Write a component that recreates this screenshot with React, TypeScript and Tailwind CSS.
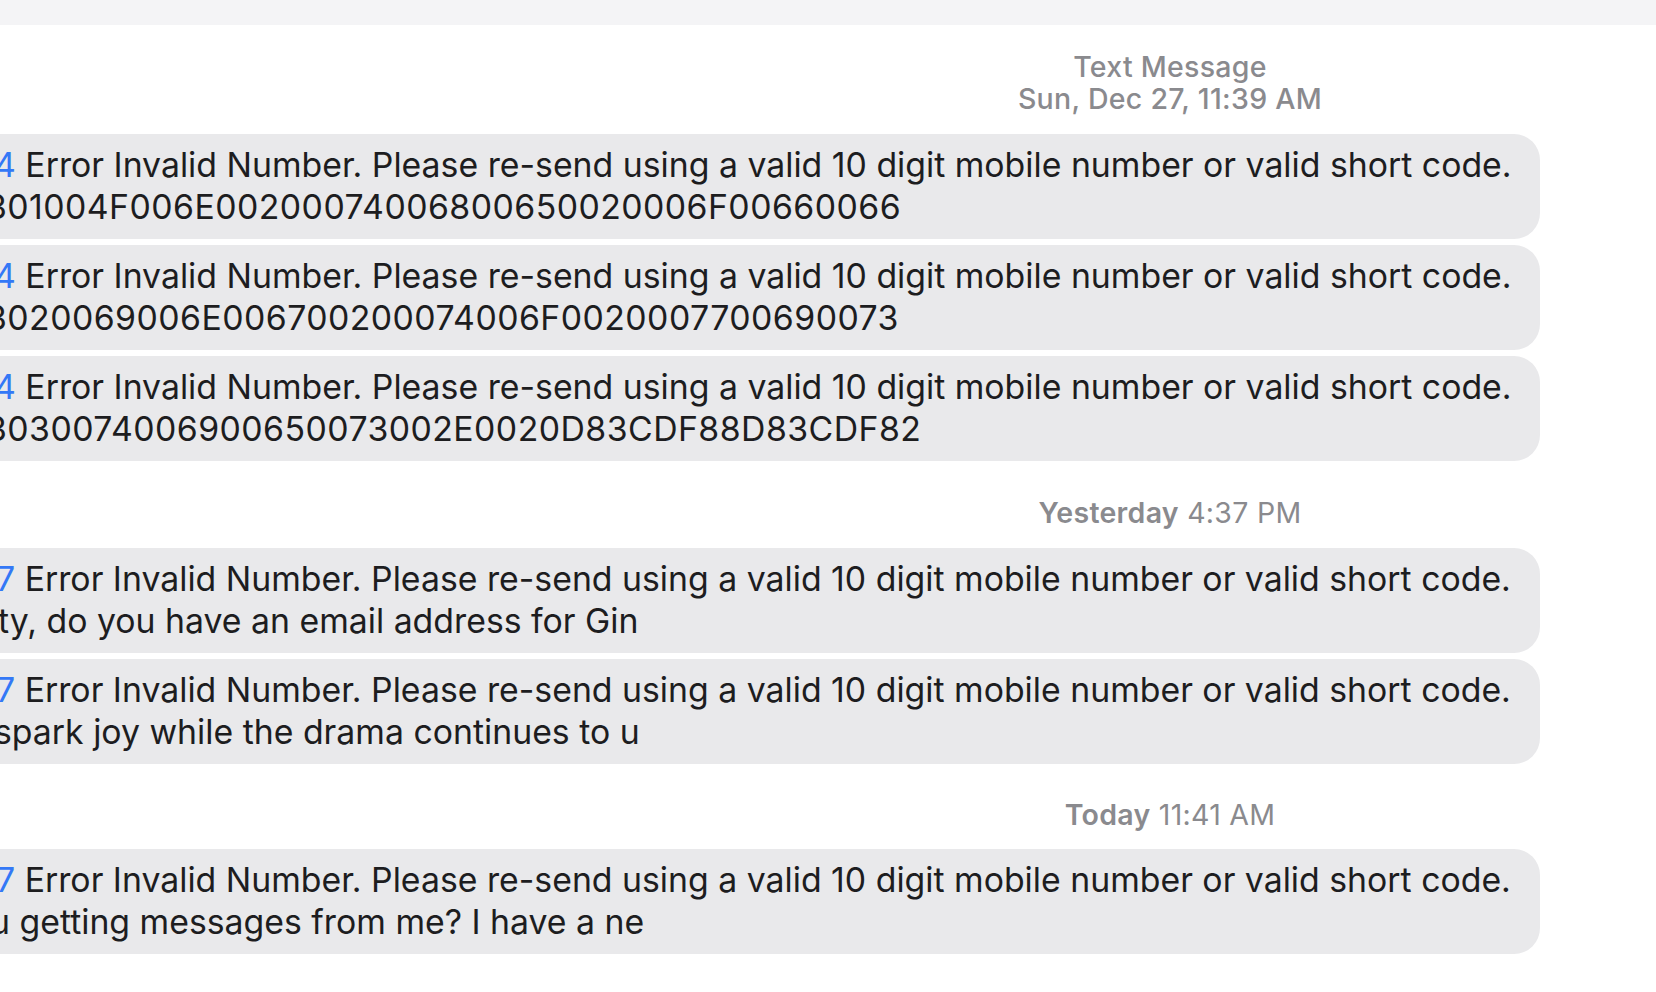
// App.tsx
type Msg = {
  lead: string;
  shift1: string;
  line2: string;
  shift2: string;
};

const firstDay: Msg[] = [
  { lead: "4", shift1: "-ml-[6px]", line2: "301004F006E00200074006800650020006F00660066", shift2: "-ml-[14px] tracking-[0.45px]" },
  { lead: "4", shift1: "-ml-[6px]", line2: "3020069006E006700200074006F0020007700690073", shift2: "-ml-[14px] tracking-[0.45px]" },
  { lead: "4", shift1: "-ml-[6px]", line2: "3030074006900650073002E0020D83CDF88D83CDF82", shift2: "-ml-[14px] tracking-[0.45px]" },
];

const yesterday: Msg[] = [
  { lead: "7", shift1: "-ml-[4px]", line2: "ty, do you have an email address for Gin", shift2: "-ml-[2px]" },
  { lead: "7", shift1: "-ml-[4px]", line2: "spark joy while the drama continues to u", shift2: "-ml-[6px]" },
];

const today: Msg[] = [
  { lead: "7", shift1: "-ml-[4px]", line2: "u getting messages from me? I have a ne", shift2: "-ml-[10px]" },
];

const ERROR_TEXT =
  " Error Invalid Number. Please re-send using a valid 10 digit mobile number or valid short code.";

function Stamp({ children, className = "" }: { children: React.ReactNode; className?: string }) {
  return (
    <div
      className={[
        "pl-[684px] text-center text-[28.5px] leading-[32px] tracking-[0.01em] text-[#8a8a8e]",
        className,
      ].join(" ")}
    >
      {children}
    </div>
  );
}

function Bubble({ m }: { m: Msg }) {
  return (
    <div className="-ml-[30px] h-[105px] w-[1570px] overflow-hidden whitespace-nowrap rounded-[26px] bg-[#e9e9eb] pl-[30px] pr-[28px] pt-[10px] text-[33.8px] leading-[42px] text-[#1d1d1f]">
      <div className={m.shift1}>
        <span className="text-[#3478f6]">{m.lead}</span>
        {ERROR_TEXT}
      </div>
      <div className={m.shift2}>{m.line2}</div>
    </div>
  );
}

export default function App() {
  return (
    <div className="h-[992px] w-[1656px] overflow-hidden bg-white font-['Inter','Liberation_Sans',sans-serif] antialiased">
      <div className="h-[25px] bg-[#f4f4f6]" />

      <div className="pt-[26px]">
        <Stamp className="font-medium">
          <div>Text Message</div>
          <div>Sun, Dec 27, 11:39 AM</div>
        </Stamp>

        <div className="mt-[19px] flex flex-col gap-[6px]">
          {firstDay.map((m, i) => (
            <Bubble key={i} m={m} />
          ))}
        </div>

        <Stamp className="mt-[36px]">
          <span className="font-semibold">Yesterday</span> 4:37 PM
        </Stamp>

        <div className="mt-[19px] flex flex-col gap-[6px]">
          {yesterday.map((m, i) => (
            <Bubble key={i} m={m} />
          ))}
        </div>

        <Stamp className="mt-[35px]">
          <span className="font-semibold">Today</span> 11:41 AM
        </Stamp>

        <div className="mt-[18px] flex flex-col gap-[6px]">
          {today.map((m, i) => (
            <Bubble key={i} m={m} />
          ))}
        </div>
      </div>
    </div>
  );
}
